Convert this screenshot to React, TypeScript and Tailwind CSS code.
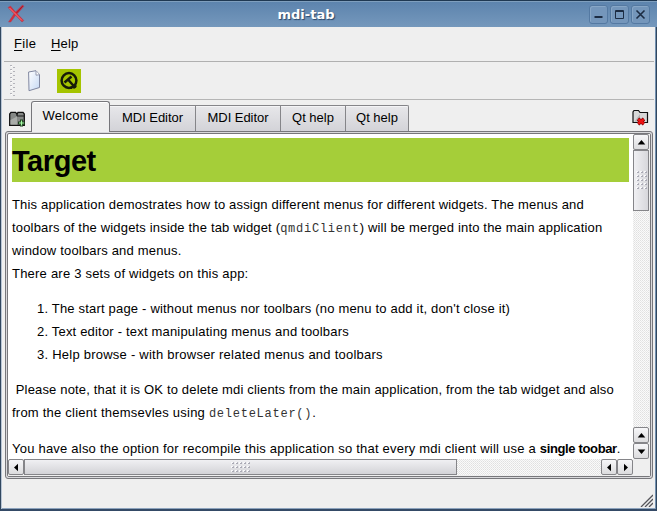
import type { ReactNode } from 'react';

const dots =
  'bg-[conic-gradient(#e0e0e0_25%,#fafafa_0_50%,#e8e8e8_0_75%,#fafafa_0)] bg-[length:2px_2px]';

function Arrow({ points }: { points: string }) {
  return (
    <svg width="9" height="9" viewBox="0 0 9 9" className="block">
      <polygon points={points} fill="#000" />
    </svg>
  );
}

const UP = '4.5,2 8.3,6.5 0.7,6.5';
const DOWN = '0.7,2.5 8.3,2.5 4.5,7';
const LEFT = '2,4.5 6,0.7 6,8.3';
const RIGHT = '7,4.5 3,0.7 3,8.3';

function ScrollButton({ points }: { points: string }) {
  return (
    <div className="flex h-4 w-4 shrink-0 items-center justify-center rounded-[2px] border border-[#858589] bg-linear-to-b from-[#f7f7f9] to-[#dcdcde]">
      <Arrow points={points} />
    </div>
  );
}

function Grip({ cols, rows }: { cols: number; rows: number }) {
  const cells = Array.from({ length: cols * rows }, (_, i) => [(i % cols) * 4, Math.floor(i / cols) * 4]);
  return (
    <svg width={cols * 4 - 1} height={rows * 4 - 1} className="block">
      {cells.map(([x, y]) => (
        <g key={`${x}-${y}`}>
          <rect x={x} y={y} width="2" height="2" fill="#f8f8fa" />
          <rect x={x + 1} y={y + 1} width="2" height="1" fill="#a9a9b4" />
          <rect x={x + 2} y={y} width="1" height="1" fill="#b9b9c2" />
        </g>
      ))}
    </svg>
  );
}

function WindowButton({ children }: { children: ReactNode }) {
  return (
    <div className="flex h-[19px] w-[19px] items-center justify-center rounded-[3px] border border-[#5479a2] bg-[#7496bb] shadow-[inset_1px_1px_0_#87a6c6]">
      <svg width="11" height="11" viewBox="0 0 11 11" fill="none" stroke="#1c2c43">
        {children}
      </svg>
    </div>
  );
}

function Tab({ label, className }: { label: string; className: string }) {
  return (
    <div
      className={`flex h-[26px] items-center justify-center border-t border-r border-[#858589] bg-linear-to-b from-[#e7e7ea] to-[#d3d3d8] pb-[3px] shadow-[inset_0_1px_0_#f4f4f6] ${className}`}
    >
      {label}
    </div>
  );
}

function Line({ children, className }: { children: ReactNode; className: string }) {
  return (
    <div className="h-[23px]">
      <span className={className}>{children}</span>
    </div>
  );
}

function Code({ children }: { children: ReactNode }) {
  return <code className="font-['Liberation_Mono',monospace] text-[12px] tracking-[0.75px] text-[#333]">{children}</code>;
}

export default function App() {
  return (
    <div className="flex h-[511px] w-[657px] flex-col overflow-hidden bg-[#efefef] font-['Liberation_Sans',Arial,sans-serif] text-[13px] leading-[23px] text-black">
      <header className="flex h-[27px] shrink-0 items-center border-t border-[#1f3852] bg-linear-to-b from-[#5c83ad] to-[#7598bc] pr-[7px] pl-[7px] shadow-[inset_0_1px_0_#7f9fbe]">
        <svg width="20" height="20" viewBox="0 0 20 20" className="shrink-0">
          <path d="M1 3.5L3.5 2L8.5 8L15.5 1L17 2.2L10.3 9.8L16.8 16.5L15 18L8.6 11.3L3.8 18H1.5L7 9.8Z" fill="#d92c39" stroke="#a93e58" strokeWidth=".5" />
          <path d="M2.5 4L15 16.5" stroke="#ff8f93" strokeWidth=".8" />
          <path d="M15.8 2L9.5 9" stroke="#9b1c2e" strokeWidth="1" />
        </svg>
        <h1 className="grow pr-[4px] text-center font-['DejaVu_Sans',sans-serif] text-[13px] font-bold text-white [text-shadow:1px_1px_1px_#29466a]">
          mdi-tab
        </h1>
        <div className="flex gap-[2px]">
          <WindowButton><path d="M1.5 8H9.5" strokeWidth="2" /></WindowButton>
          <WindowButton><path d="M1.5 1.5H9.5V9.5H1.5Z M1.5 2.5H9.5" /></WindowButton>
          <WindowButton><path d="M1.5 1.5L9.5 9.5M9.5 1.5L1.5 9.5" strokeWidth="1.6" /></WindowButton>
        </div>
      </header>

      <div className="flex h-[484px] flex-col border-x border-b-2 border-[#31475f] border-b-[#344a66] pr-[2px] pl-[3px] shadow-[inset_1px_0_0_#b8c5d5,inset_-1px_0_0_#7391b0,inset_0_-1px_0_#8da3bd]">
        <nav className="flex h-[35px] shrink-0 border-b border-[#b0b0b0] pt-[5px] pl-[10px]">
          <span className="w-[37px] tracking-[0.3px]"><u className="underline-offset-2">F</u>ile</span>
          <span className="tracking-[0.2px]"><u className="underline-offset-2">H</u>elp</span>
        </nav>

        <div className="flex h-[38px] shrink-0 items-center border-b border-[#b5b5b5] pl-[6px]">
          <svg width="6" height="31" className="mr-[12px]">
            {[0, 1, 2, 3, 4, 5, 6, 7].map((i) => (
              <g key={i} fill="#b4b4bb">
                <rect x="0" y={i * 4} width="2" height="1" />
                <rect x="3" y={i * 4 + 2} width="2" height="1" />
                <rect x="1" y={i * 4 + 1} width="1" height="1" fill="#fff" />
              </g>
            ))}
          </svg>
          <svg width="14" height="22" viewBox="0 0 14 22" className="mr-[15px]">
            <defs>
              <linearGradient id="page" x2="1" y2="1">
                <stop stopColor="#fff" />
                <stop offset="1" stopColor="#c5d8f4" />
              </linearGradient>
            </defs>
            <path d="M.6 2L8 .7L11.5 4.5V17.5L1 20.7Z" fill="url(#page)" stroke="#8087a0" />
            <path d="M8 1V5.2L11.5 4.7" fill="#fff" stroke="#8087a0" strokeWidth=".8" />
          </svg>
          <svg width="24" height="24" viewBox="0 0 24 24">
            <rect width="24" height="24" fill="#a5c400" />
            <g fill="none" stroke="#171b09" strokeWidth="2.5">
              <circle cx="12" cy="11.5" r="7.4" />
              <path d="M7.5 13.5L14.5 7.5M11 10.5L18.5 19" />
              <path d="M11 19.2H15M16 19L19.5 16.5" strokeWidth="1.8" />
            </g>
          </svg>
        </div>

        <div className="flex h-[31px] shrink-0 items-end pr-[5px] pl-[5px]">
          <svg width="17" height="16" viewBox="0 0 17 16" className="mb-[4px]">
            <path d="M.7 14.3V3L2 1.3H6.5L8 3L9 1.3H14L15.3 3V14.3Z" fill="#858886" stroke="#111" strokeWidth="1.3" />
            <path d="M1.5 9L8 5.5V13.5H1.5Z" fill="#a9aca9" />
            <path d="M8 5H15M8 2.5V5" stroke="#181818" strokeWidth="1.2" />
            <path d="M12.5 8.5V15.5M9 12H16" stroke="#1e3d20" strokeWidth="3" />
            <path d="M12.5 9.5V14.5M10 12H15" stroke="#a6ffa6" strokeWidth="1.2" />
          </svg>
          <div className="z-10 -mb-px ml-[5px] flex h-[31px] w-[79px] items-center justify-center rounded-t-[3px] border border-b-0 border-[#77777b] bg-[#efefef] pb-[3px] tracking-[0.3px] shadow-[inset_0_1px_0_#fff]">
            Welcome
          </div>
          <Tab label="MDI Editor" className="w-[86px] tracking-[-0.05px]" />
          <Tab label="MDI Editor" className="w-[85px] tracking-[-0.05px]" />
          <Tab label="Qt help" className="w-[65px]" />
          <Tab label="Qt help" className="w-[63px] rounded-tr-[2px]" />
          <svg width="17" height="17" viewBox="0 0 17 17" className="mb-[5px] ml-auto">
            <path d="M1 13.5V3L2 1.5H6.5L8 3.5H15.5V13.5Z" fill="#d8d8d8" stroke="#111" strokeWidth="1.2" />
            <path d="M2.5 12.5L8 5V12.5Z" fill="#b2b2b2" />
            <path d="M6 10L12 15M12 10L6 15" stroke="#720000" strokeWidth="3.6" />
            <path d="M6.3 10.2L11.7 14.8M11.7 10.2L6.3 14.8" stroke="#ee1212" strokeWidth="2.5" />
          </svg>
        </div>

        <div className="ml-px h-[348px] w-[648px] shrink-0 rounded-[3px] border border-[#77777b] bg-[#d9d9dc] p-px">
          <main className="h-[344px] rounded-[2px] border border-[#77777b] bg-white">
            <div className="flex h-[325px]">
              <article className="h-[325px] w-[625px] overflow-hidden pt-[4px] pl-[4px] whitespace-pre">
                <h2 className="h-[44px] w-[617px] bg-[#a5ce39] text-[29px] leading-[46px] font-bold">
                  <span className="tracking-[-0.45px]">Target</span>
                </h2>
                <section className="pt-[11px]">
                  <Line className="tracking-[0.17px]">This application demostrates how to assign different menus for different widgets. The menus and</Line>
                  <Line className="tracking-[0.17px]">toolbars of the widgets inside the tab widget (<Code>qmdiClient</Code>) will be merged into the main application</Line>
                  <Line className="tracking-[0.18px]">window toolbars and menus.</Line>
                  <Line className="tracking-[0.22px]">There are 3 sets of widgets on this app:</Line>
                </section>
                <section className="pt-[12px] pl-[25px]">
                  <Line className="tracking-[0.19px]">1. The start page - without menus nor toolbars (no menu to add it, don't close it)</Line>
                  <Line className="tracking-[0.19px]">2. Text editor - text manipulating menus and toolbars</Line>
                  <Line className="tracking-[0.24px]">3. Help browse - with browser related menus and toolbars</Line>
                </section>
                <section className="pt-[12px]">
                  <Line className="tracking-[0.165px]"> Please note, that it is OK to delete mdi clients from the main application, from the tab widget and also</Line>
                  <Line className="tracking-[0.23px]">from the client themsevles using <Code>deleteLater()</Code>.</Line>
                </section>
                <section className="pt-[13px]">
                  <Line className="tracking-[0.22px]">You have also the option for recompile this application so that every mdi client will use a <b className="tracking-[-0.35px]">single toobar</b>.</Line>
                </section>
              </article>
              <div className={`flex h-[325px] w-4 flex-col ${dots}`}>
                <ScrollButton points={UP} />
                <div className="flex h-[61px] items-center justify-center border border-[#858589] bg-linear-to-r from-[#f0f0f3] to-[#d7d7db]">
                  <Grip cols={3} rows={5} />
                </div>
                <div className="mt-auto"><ScrollButton points={UP} /></div>
                <ScrollButton points={DOWN} />
              </div>
              <div className="grow bg-[#efefef]" />
            </div>
            <div className="flex h-[17px] bg-[#efefef]">
              <div className={`flex h-4 w-[625px] ${dots}`}>
                <ScrollButton points={LEFT} />
                <div className="flex h-4 w-[433px] items-center justify-center border border-[#858589] bg-linear-to-b from-[#f0f0f3] to-[#d3d3d7]">
                  <Grip cols={5} rows={3} />
                </div>
                <div className="ml-auto flex">
                  <ScrollButton points={LEFT} />
                  <ScrollButton points={RIGHT} />
                </div>
              </div>
            </div>
          </main>
        </div>

        <footer className="flex grow items-end justify-end pr-px pb-[2px]">
          <svg width="13" height="13" viewBox="0 0 13 13" fill="none">
            <path d="M1 13L13 1M5 13L13 5M9 13L13 9" stroke="#55555a" strokeWidth="1.3" />
          </svg>
        </footer>
      </div>
    </div>
  );
}
